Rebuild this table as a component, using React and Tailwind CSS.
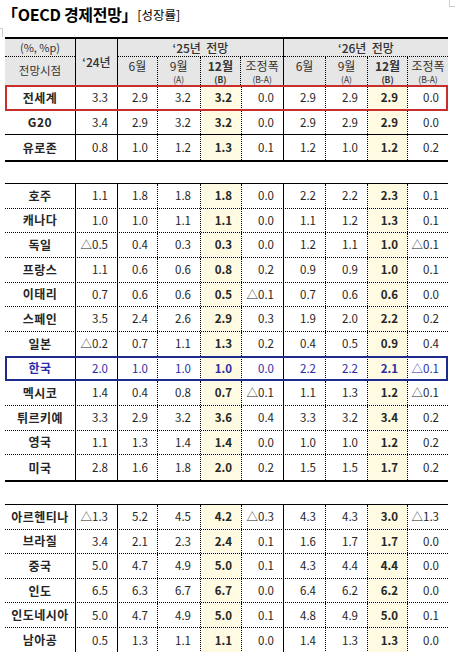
const W = ["w-[71px]", "w-[42px]", "w-[40px]", "w-[43px]", "w-[41px]", "w-[42px]", "w-[42px]", "w-[42px]", "w-[40px]", "w-[40px]"];
const RB = [
  "border-r border-black",
  "border-r border-black",
  "border-r border-dotted border-black",
  "border-r border-dotted border-black",
  "border-r border-dotted border-black",
  "border-r border-black",
  "border-r border-dotted border-black",
  "border-r border-dotted border-black",
  "border-r border-dotted border-black",
  "",
];

const groups = [
  [
    ["전세계", "3.3", "2.9", "3.2", "3.2", "0.0", "2.9", "2.9", "2.9", "0.0"],
    ["G20", "3.4", "2.9", "3.2", "3.2", "0.0", "2.9", "2.9", "2.9", "0.0"],
    ["유로존", "0.8", "1.0", "1.2", "1.3", "0.1", "1.2", "1.0", "1.2", "0.2"],
  ],
  [
    ["호주", "1.1", "1.8", "1.8", "1.8", "0.0", "2.2", "2.2", "2.3", "0.1"],
    ["캐나다", "1.0", "1.0", "1.1", "1.1", "0.0", "1.1", "1.2", "1.3", "0.1"],
    ["독일", "△0.5", "0.4", "0.3", "0.3", "0.0", "1.2", "1.1", "1.0", "△0.1"],
    ["프랑스", "1.1", "0.6", "0.6", "0.8", "0.2", "0.9", "0.9", "1.0", "0.1"],
    ["이태리", "0.7", "0.6", "0.6", "0.5", "△0.1", "0.7", "0.6", "0.6", "0.0"],
    ["스페인", "3.5", "2.4", "2.6", "2.9", "0.3", "1.9", "2.0", "2.2", "0.2"],
    ["일본", "△0.2", "0.7", "1.1", "1.3", "0.2", "0.4", "0.5", "0.9", "0.4"],
    ["한국", "2.0", "1.0", "1.0", "1.0", "0.0", "2.2", "2.2", "2.1", "△0.1"],
    ["멕시코", "1.4", "0.4", "0.8", "0.7", "△0.1", "1.1", "1.3", "1.2", "△0.1"],
    ["튀르키예", "3.3", "2.9", "3.2", "3.6", "0.4", "3.3", "3.2", "3.4", "0.2"],
    ["영국", "1.1", "1.3", "1.4", "1.4", "0.0", "1.0", "1.0", "1.2", "0.2"],
    ["미국", "2.8", "1.6", "1.8", "2.0", "0.2", "1.5", "1.5", "1.7", "0.2"],
  ],
  [
    ["아르헨티나", "△1.3", "5.2", "4.5", "4.2", "△0.3", "4.3", "4.3", "3.0", "△1.3"],
    ["브라질", "3.4", "2.1", "2.3", "2.4", "0.1", "1.6", "1.7", "1.7", "0.0"],
    ["중국", "5.0", "4.7", "4.9", "5.0", "0.1", "4.3", "4.4", "4.4", "0.0"],
    ["인도", "6.5", "6.3", "6.7", "6.7", "0.0", "6.4", "6.2", "6.2", "0.0"],
    ["인도네시아", "5.0", "4.7", "4.9", "5.0", "0.1", "4.8", "4.9", "5.0", "0.1"],
    ["남아공", "0.5", "1.3", "1.1", "1.1", "0.0", "1.4", "1.3", "1.3", "0.0"],
  ],
];

function Row({ cells, solid, last }) {
  const korea = cells[0] === "한국";
  const world = cells[0] === "전세계";
  const line = last ? "" : solid ? "border-b border-black" : "border-b border-dotted border-black";
  return (
    <div className={`relative flex h-[24.67px] ${line} ${korea ? "text-[#2b2ba8]" : "text-[#262626]"}`}>
      {cells.map((c, i) => (
        <div
          key={i}
          className={`${W[i]} ${RB[i]} flex h-full items-center ${
            i === 0
              ? "justify-center text-[12px] font-bold tracking-[0.5px]"
              : "justify-end pr-[9px] text-[11.5px]"
          } ${i === 4 || i === 8 ? "bg-[#fffbe3] font-bold" : ""}`}
        >
          {c}
        </div>
      ))}
      {world && (
        <div className="pointer-events-none absolute -top-px right-0 -bottom-px left-0 z-10 border-2 border-[#c62f2b]" />
      )}
      {korea && (
        <div className="pointer-events-none absolute -top-px right-0 -bottom-px left-0 z-10 border-2 border-[#1f2a8f]" />
      )}
    </div>
  );
}

function Sub({ top, sub, bold }) {
  return (
    <div className="flex flex-col items-center pt-[2px]">
      <span className={`h-[13px] text-[12px] leading-[13px] ${bold ? "font-bold" : ""}`}>{top}</span>
      {sub && <span className={`mt-[3px] h-[9px] text-[8.5px] leading-[9px] ${bold ? "font-bold" : ""}`}>{sub}</span>}
    </div>
  );
}

export default function App() {
  return (
    <div className="relative h-[652px] w-[455px] bg-white font-[family-name:'Noto_Sans_CJK_KR',sans-serif] text-[#222]">
      <div className="absolute top-[28px] left-0 h-[9px] w-[3px] border-t border-r border-[#cfcfcf]" />
      <div className="absolute top-0 right-0 h-[7px] w-[6px] border-b border-l border-[#cfcfcf]" />

      <div className="flex h-[37px] items-start pl-[2px] pt-[2px]">
        <span className="text-[16px] font-bold tracking-[-0.3px] text-black">「OECD 경제전망」</span>
        <span className="mt-[4px] text-[12.5px] text-black">[성장률]</span>
      </div>

      <div className="ml-[5px] w-[443px]">
        <div className="flex h-[49px] border-t-2 border-b border-black bg-[#e6e6e6] text-[#333]">
          <div className={`${W[0]} ${RB[0]} flex flex-col`}>
            <div className="flex h-[18px] items-center justify-center border-b border-dotted border-black text-[11px]">
              (%, %p)
            </div>
            <div className="flex flex-1 items-center justify-center text-[11.5px]">전망시점</div>
          </div>
          <div className={`${W[1]} ${RB[1]} flex items-center justify-center text-[12px] font-medium`}>‘24년</div>
          <div className="flex w-[166px] flex-col border-r border-black">
            <div className="flex h-[18px] items-center justify-center border-b border-dotted border-black text-[12px] font-medium">
              ‘25년&nbsp;&nbsp;전망
            </div>
            <div className="flex flex-1">
              <div className={`${W[2]} ${RB[2]}`}><Sub top="6월" /></div>
              <div className={`${W[3]} ${RB[3]}`}><Sub top="9월" sub="(A)" /></div>
              <div className={`${W[4]} ${RB[4]}`}><Sub top="12월" sub="(B)" bold /></div>
              <div className={`${W[5]}`}><Sub top="조정폭" sub="(B-A)" /></div>
            </div>
          </div>
          <div className="flex w-[164px] flex-col">
            <div className="flex h-[18px] items-center justify-center border-b border-dotted border-black text-[12px] font-medium">
              ‘26년&nbsp;&nbsp;전망
            </div>
            <div className="flex flex-1">
              <div className={`${W[6]} ${RB[6]}`}><Sub top="6월" /></div>
              <div className={`${W[7]} ${RB[7]}`}><Sub top="9월" sub="(A)" /></div>
              <div className={`${W[8]} ${RB[8]}`}><Sub top="12월" sub="(B)" bold /></div>
              <div className={`${W[9]}`}><Sub top="조정폭" sub="(B-A)" /></div>
            </div>
          </div>
        </div>

        {groups.map((g, gi) => (
          <div key={gi}>
            {gi > 0 && <div className={gi === 1 ? "h-[21px]" : "h-[22px]"} />}
            <div className={`border-b-2 border-black ${gi > 0 ? "border-t" : ""}`}>
              {g.map((r, ri) => (
                <Row key={ri} cells={r} solid={gi === 0} last={ri === g.length - 1} />
              ))}
            </div>
          </div>
        ))}
      </div>
    </div>
  );
}
